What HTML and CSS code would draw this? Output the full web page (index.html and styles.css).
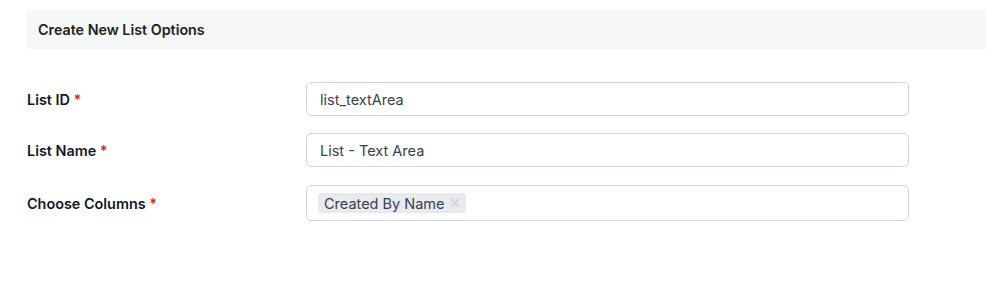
FILE: index.html
```html
<!DOCTYPE html>
<html>
<head>
<meta charset="utf-8">
<link rel="stylesheet" href="styles.css">
</head>
<body>
<div class="page">
  <div class="section-header">Create New List Options</div>
  <div class="form">
    <div class="row">
      <label class="label">List ID <span class="req">*</span></label>
      <div class="input">list_textArea</div>
    </div>
    <div class="row">
      <label class="label">List Name <span class="req">*</span></label>
      <div class="input">List - Text Area</div>
    </div>
    <div class="row row-multi">
      <label class="label">Choose Columns <span class="req">*</span></label>
      <div class="input multi">
        <span class="tag">Created By Name<svg class="tag-x" width="10" height="10" viewBox="0 0 10 10"><path d="M1 1L9 9M9 1L1 9" stroke="#cfd2d6" stroke-width="1.6" fill="none"/></svg></span>
      </div>
    </div>
  </div>
</div>
</body>
</html>
```
FILE: styles.css
```css
* { box-sizing: border-box; }
html, body { margin: 0; background: #fff; }
body { font-family: Inter, "Noto Sans", sans-serif; }
.page { padding: 10px 0 0 27px; }
.section-header {
  height: 39px;
  background: #f6f7f7;
  display: flex;
  align-items: center;
  padding-left: 11px;
  font-size: 14.3px;
  font-weight: 600;
  color: #222;
}
.form {
  display: flex;
  flex-direction: column;
  gap: 17px;
  padding-top: 33px;
}
.row {
  display: flex;
  align-items: center;
}
.row-multi { margin-top: 1px; }
.label {
  width: 279px;
  font-size: 14.4px;
  font-weight: 600;
  color: #111827;
}
.req { color: #e11d1d; }
.input {
  width: 603px;
  height: 34px;
  border: 1px solid #d1d5db;
  border-radius: 5px;
  display: flex;
  align-items: center;
  padding-left: 13px;
  font-size: 14.5px;
  color: #374151;
}
.input.multi { height: 36px; padding-left: 11px; }
.tag {
  background: #e8eaee;
  border-radius: 3px;
  height: 20px;
  display: inline-flex;
  align-items: center;
  padding: 0 6px 0 6px;
  font-size: 14.5px;
  color: #374151;
}
.tag-x { margin-left: 5px; }
```
